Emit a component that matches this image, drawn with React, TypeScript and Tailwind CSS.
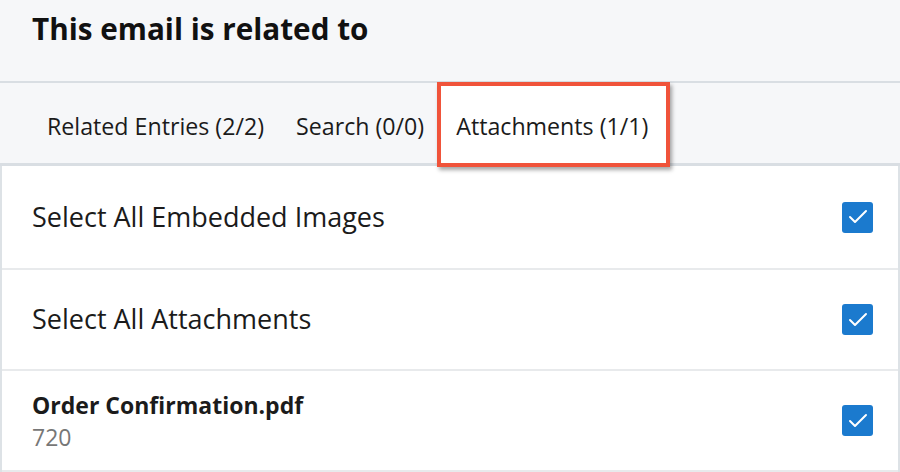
import { Check } from "lucide-react";

const tabs = [
   { label: "Related Entries (2/2)", active: false },
   { label: "Search (0/0)", active: false },
   { label: "Attachments (1/1)", active: true },
];

function CheckBox() {
   return (
      <div className="w-[31px] h-[31px] rounded-[3px] bg-[#1b7ace] flex items-center justify-center">
         <Check size={24} strokeWidth={2} className="text-white" />
      </div>
   );
}

export default function App() {
   return (
      <div className="w-[900px] h-[472px] overflow-hidden bg-white font-['Open_Sans',sans-serif] text-[#1b1b1b]">
         {/* Header */}
         <div className="h-[83px] bg-[#f6f7f9] border-b-2 border-[#d9dee3] px-8 pt-[9px]">
            <h1 className="text-[29.7px] font-bold leading-[40px] text-[#111]">This email is related to</h1>
         </div>

         {/* Tabs */}
         <div className="h-[83px] bg-[#f6f7f9] border-b-[3px] border-[#d9dee3] flex items-center pl-[31px] pt-[3px]">
            {tabs.map((t) =>
               t.active ? (
                  <div
                     key={t.label}
                     className="-ml-[3px] h-[85px] flex items-center pt-[3px] pl-[15px] pr-[18px] bg-white text-[23.2px] border-4 border-[#f0533a] shadow-[2px_3px_4px_rgba(0,0,0,0.35)]"
                  >
                     {t.label}
                  </div>
               ) : (
                  <div key={t.label} className="px-4 pt-[3px] text-[23.2px] leading-[40px]">
                     {t.label}
                  </div>
               )
            )}
         </div>

         {/* Rows */}
         <div className="border-l-2 border-r-2 border-[#dde2e6]">
            <div className="h-[104px] border-b-2 border-[#e8eaec] flex items-center justify-between pl-[30px] pr-[25px]">
               <span className="text-[27px]">Select All Embedded Images</span>
               <CheckBox />
            </div>
            <div className="h-[101px] border-b-2 border-[#e8eaec] flex items-center justify-between pl-[30px] pr-[25px]">
               <span className="text-[27px]">Select All Attachments</span>
               <CheckBox />
            </div>
            <div className="h-[101px] border-b-2 border-[#e8eaec] flex items-center justify-between pl-[30px] pr-[25px]">
               <div className="flex flex-col">
                  <span className="text-[23px] font-bold leading-[32px]">Order Confirmation.pdf</span>
                  <span className="text-[23px] leading-[32px] text-[#777]">720</span>
               </div>
               <CheckBox />
            </div>
         </div>
      </div>
   );
}
